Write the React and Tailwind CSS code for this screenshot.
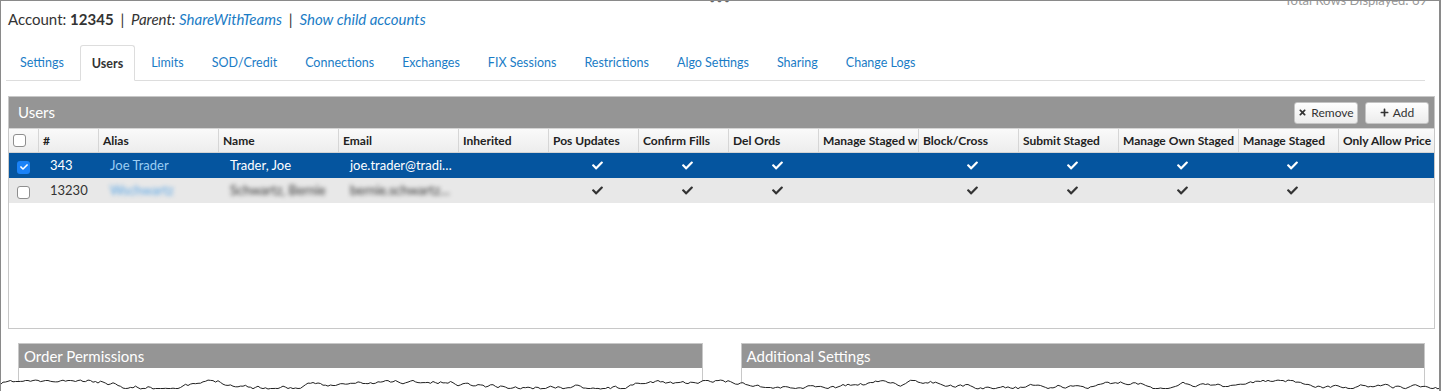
import { FaCheck, FaTimes, FaPlus } from "react-icons/fa";

const cols = [
  { key: "sel", label: "", w: "w-[30px]" },
  { key: "num", label: "#", w: "w-[60px]" },
  { key: "alias", label: "Alias", w: "w-[120px]" },
  { key: "name", label: "Name", w: "w-[120px]" },
  { key: "email", label: "Email", w: "w-[120px]" },
  { key: "inh", label: "Inherited", w: "w-[90px]" },
  { key: "pos", label: "Pos Updates", w: "w-[90px]", check: true },
  { key: "fills", label: "Confirm Fills", w: "w-[90px]", check: true },
  { key: "del", label: "Del Ords", w: "w-[90px]", check: true },
  { key: "msw", label: "Manage Staged w", w: "w-[100px]" },
  { key: "block", label: "Block/Cross", w: "w-[100px]", check: true },
  { key: "submit", label: "Submit Staged", w: "w-[100px]", check: true },
  { key: "own", label: "Manage Own Staged", w: "w-[120px]", check: true },
  { key: "ms", label: "Manage Staged", w: "w-[100px]", check: true },
  { key: "price", label: "Only Allow Price Improvement", w: "flex-1" },
];

const rows = [
  { num: "343", alias: "Joe Trader", name: "Trader, Joe", email: "joe.trader@tradi…", selected: true },
  { num: "13230", alias: "Wschwartz", name: "Schwartz, Bernie", email: "bernie.schwartz…", selected: false, blurred: true },
];

const tabs = ["Settings", "Users", "Limits", "SOD/Credit", "Connections", "Exchanges", "FIX Sessions", "Restrictions", "Algo Settings", "Sharing", "Change Logs"];

// jagged torn edge along the bottom of the screenshot
function tornPath() {
  let seed = 11;
  const rnd = () => {
    seed = (seed * 16807) % 2147483647;
    return (seed - 1) / 2147483646;
  };
  let y = 7;
  let d = "M0 7";
  for (let x = 2; x <= 1444; x += 2.5) {
    y += (rnd() - 0.5) * 3.6;
    if (y < 3) y = 3.5;
    if (y > 12) y = 11.5;
    d += ` L${x} ${y.toFixed(1)}`;
  }
  return d;
}

const torn = tornPath();

function Checkbox({ checked }) {
  return checked ? (
    <span className="flex h-[13px] w-[13px] items-center justify-center rounded-[3px] bg-[#1a82f7]">
      <FaCheck className="h-[8px] w-[8px] text-white" />
    </span>
  ) : (
    <span className="block h-[13px] w-[13px] rounded-[3px] border border-[#8e8e8e] bg-white" />
  );
}

function SubPanel({ title, className }) {
  return (
    <div className={`border border-[#c8c8c8] border-b-0 ${className}`}>
      <div className="h-[24px] bg-[#959595] pl-[5px] text-[15px] leading-[24px] text-white">{title}</div>
      <div className="h-[30px] bg-white" />
    </div>
  );
}

export default function App() {
  return (
    <div
      className="relative h-[391px] w-[1441px] overflow-hidden border-t border-r-[2px] border-l border-[#8a8a8a] bg-white text-[#333]"
      style={{ fontFamily: "Lato, 'Open Sans', sans-serif" }}
    >
      <div className="flex h-0 justify-center">
        <span className="-mt-[9px] text-[11px] tracking-[1px] text-[#666]">•••</span>
      </div>
      <div className="flex h-0 justify-end pr-[12px]">
        <span className="-mt-[10px] text-[13px] text-[#999]">Total Rows Displayed: 69</span>
      </div>

      <div className="pt-[8px] pl-[7px] text-[15px] leading-[20px]">
        Account: <span className="font-bold">12345</span> <span className="mx-[3px]">|</span>{" "}
        <span className="italic">Parent: </span>
        <span className="italic text-[#1a7cc6]">ShareWithTeams</span> <span className="mx-[3px]">|</span>{" "}
        <span className="italic text-[#1a7cc6]">Show child accounts</span>
      </div>

      <div className="mt-[16px] mr-[14px] ml-[5px] flex h-[36px] items-end border-b border-[#dddddd]">
        {tabs.map((t) =>
          t === "Users" ? (
            <div
              key={t}
              className="-mb-px mx-[2px] flex h-[36px] items-center rounded-t-[3px] border border-b-white border-[#dddddd] bg-white px-[11px] pt-[2px] text-[12.5px] font-bold text-[#333]"
            >
              {t}
            </div>
          ) : (
            <div key={t} className="mx-[2px] flex h-[35px] items-center px-[12px] pt-[2px] text-[12.5px] text-[#1a7cc6]">
              {t}
            </div>
          )
        )}
      </div>

      <div className="mt-[15px] mr-[4px] ml-[7px] h-[233px] border border-[#c8c8c8] bg-white">
        <div className="flex h-[31px] items-center justify-between bg-[#959595] pr-[5px] pl-[9px]">
          <span className="text-[15px] text-white">Users</span>
          <div className="flex gap-[7px]">
            <button className="flex h-[22px] w-[64px] items-center justify-center gap-[4px] rounded-[3px] border border-[#c4c4c4] bg-gradient-to-b from-white to-[#ececec] text-[12px] text-[#333]">
              <FaTimes className="h-[9px] w-[9px]" />
              Remove
            </button>
            <button className="flex h-[22px] w-[64px] items-center justify-center gap-[4px] rounded-[3px] border border-[#c4c4c4] bg-gradient-to-b from-white to-[#ececec] text-[12px] text-[#333]">
              <FaPlus className="h-[9px] w-[9px]" />
              Add
            </button>
          </div>
        </div>

        <div className="flex h-[25px] border-t border-b border-[#d4d4d4] bg-gradient-to-b from-[#fafafa] to-[#ededed] text-[12px] font-bold text-[#222]">
          {cols.map((c) => (
            <div
              key={c.key}
              className={`${c.w} flex items-center overflow-hidden border-r border-[#d6d6d6] pl-[4px] whitespace-nowrap last:border-r-0`}
            >
              {c.key === "sel" ? <Checkbox checked={false} /> : c.label}
            </div>
          ))}
        </div>

        {rows.map((r) => (
          <div
            key={r.num}
            className={`flex h-[25px] text-[13px] ${r.selected ? "bg-[#05559f] text-white" : "bg-[#e8e8e8] text-[#333]"}`}
          >
            {cols.map((c) => {
              if (c.key === "sel")
                return (
                  <div key={c.key} className={`${c.w} flex items-center pt-[3px] pl-[8px]`}>
                    <Checkbox checked={r.selected} />
                  </div>
                );
              if (c.check)
                return (
                  <div key={c.key} className={`${c.w} flex items-center justify-center pl-[6px]`}>
                    <FaCheck className={`h-[11px] w-[11px] ${r.selected ? "text-white" : "text-[#333]"}`} />
                  </div>
                );
              const val = r[c.key];
              const blur = r.blurred && c.key !== "num" ? "blur-[2px]" : "";
              const color = c.key === "alias" ? (r.selected ? "text-[#9ccdf3]" : "text-[#5aa6e6]") : "";
              return (
                <div key={c.key} className={`${c.w} flex items-center overflow-hidden pl-[11px] whitespace-nowrap`}>
                  <span className={`${blur} ${color}`}>{val}</span>
                </div>
              );
            })}
          </div>
        ))}
      </div>

      <div className="mt-[14px] mr-[14px] ml-[17px] flex gap-[38px]">
        <SubPanel title="Order Permissions" className="flex-1" />
        <SubPanel title="Additional Settings" className="flex-1" />
      </div>

      <svg className="absolute bottom-0 left-0 h-[14px] w-[1441px]" viewBox="0 0 1441 14" preserveAspectRatio="none">
        <path d={`${torn} L1444 14 L0 14 Z`} fill="white" />
        <path d={torn} fill="none" stroke="#222" strokeWidth="1" />
      </svg>
    </div>
  );
}
